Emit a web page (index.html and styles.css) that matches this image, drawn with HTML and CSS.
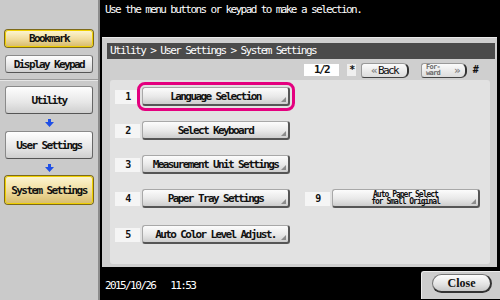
FILE: index.html
```html
<!DOCTYPE html>
<html lang="en">
<head>
  <meta charset="UTF-8" />
  <title>System Settings</title>
  <link rel="stylesheet" href="styles.css">
</head>
<body>
  <div class="screen">
    <!-- left side: shortcuts and path -->
    <aside class="side">
      <div class="side-top">
        <button type="button" class="sbtn short on">Bookmark</button>
        <button type="button" class="sbtn short">Display Keypad</button>
      </div>
      <div class="side-nav">
        <button type="button" class="sbtn tall">Utility</button>
        <span class="down"><svg width="9" height="8" viewBox="0 0 9 8"><path d="M3 0h3v3h3L4.5 8 0 3h3z" fill="#1f4fe6"/></svg></span>
        <button type="button" class="sbtn tall">User Settings</button>
        <span class="down"><svg width="9" height="8" viewBox="0 0 9 8"><path d="M3 0h3v3h3L4.5 8 0 3h3z" fill="#1f4fe6"/></svg></span>
        <button type="button" class="sbtn tall on">System Settings</button>
      </div>
    </aside>

    <main class="main">
      <p class="msg">Use the menu buttons or keypad to make a selection.</p>

      <section class="panel">
        <div class="crumb">Utility &gt; User Settings &gt; System Settings</div>
        <div class="pager">
          <span class="page">1/2</span>
          <span class="key">*</span>
          <button type="button" class="nav back"><i>&#171;</i>Back</button>
          <button type="button" class="nav fwd"><small>For-<br>ward</small><i>&#187;</i></button>
          <span class="key hash">#</span>
        </div>

        <div class="menu">
          <div class="item"><span class="num">1</span><button type="button" class="mbtn sel">Language Selection</button></div>
          <div class="item"><span class="num">2</span><button type="button" class="mbtn">Select Keyboard</button></div>
          <div class="item"><span class="num">3</span><button type="button" class="mbtn">Measurement Unit Settings</button></div>
          <div class="item"><span class="num">4</span><button type="button" class="mbtn">Paper Tray Settings</button></div>
          <div class="item"><span class="num">5</span><button type="button" class="mbtn">Auto Color Level Adjust.</button></div>
          <div class="item right"><span class="num">9</span><button type="button" class="mbtn two">Auto Paper Select<br>for Small Original</button></div>
        </div>
      </section>

      <footer class="foot">
        <span class="date">2015/10/26</span>
        <span class="time">11:53</span>
        <div class="close-tab"><button type="button" class="close">Close</button></div>
      </footer>
    </main>
  </div>
</body>
</html>
```

FILE: styles.css
```css
body {
  margin: 0;
  font-family: "DejaVu Sans Mono", "Liberation Mono", monospace;
  font-size: 11px;
  letter-spacing: -1.6px;
  color: #111;
}
button {
  font: inherit;
  letter-spacing: inherit;
  color: #111;
  padding: 0;
  cursor: pointer;
}
.screen {
  display: flex;
  width: 500px;
  height: 300px;
  overflow: hidden;
  background: #000;
}

/* 左側 */
.side {
  width: 98px;
  border-right: 2px solid #8c8c8c;
  background: #cacaca;
  display: flex;
  flex-direction: column;
}
.side-top {
  display: flex;
  flex-direction: column;
  gap: 8px;
  padding: 30px 5px 6px;
  border-bottom: 1px solid #9a9a9a;
}
.side-nav {
  display: flex;
  flex-direction: column;
  align-items: center;
  padding: 5px 5px 0;
  border-top: 1px solid #e6e6e6;
}
.sbtn {
  width: 88px;
  font-weight: bold;
  border: 1px solid #8a8a8a;
  border-bottom-color: #555;
  border-right-color: #666;
  border-radius: 3px;
  background: linear-gradient(#fefefe, #e6e6e6 60%, #cfcfcf);
}
.sbtn.short { height: 17px; }
.sbtn.short + .sbtn.short { height: 18px; }
.sbtn.tall { height: 28px; }
.sbtn.on {
  border: 1px solid #efcf00;
  box-shadow: 0 0 0 1px #7d6a1a;
  background: linear-gradient(#fcf4cf, #efdb9c 55%, #d8bd70);
}
.down {
  height: 17px;
  display: flex;
  align-items: center;
  justify-content: center;
}

/* メイン */
.main {
  flex: 1;
  display: flex;
  flex-direction: column;
  min-width: 0;
}
.msg {
  margin: 0;
  height: 33px;
  padding: 4px 5px 0;
  color: #fff;
  line-height: 12px;
}
.panel {
  height: 221px;
  margin: 0 3px 0 2px;
  padding: 5px 2px 3px 5px;
  background: #cfcfcf;
  border-top: 1px solid #e8e8e8;
  display: flex;
  flex-direction: column;
}
.crumb {
  height: 16px;
  line-height: 16px;
  padding-left: 3px;
  background: #4b4b4b;
  color: #fff;
}
.pager {
  height: 21px;
  display: flex;
  justify-content: flex-end;
  align-items: center;
  padding: 1px 17px 0 0;
  box-sizing: border-box;
}
.page {
  width: 35px;
  height: 12px;
  line-height: 12px;
  margin-right: 8px;
  background: #fff;
  text-align: center;
  font-weight: bold;
}
.key {
  width: 9px;
  height: 12px;
  line-height: 12px;
  margin-right: 5px;
  background: #efefef;
  text-align: center;
  font-weight: bold;
  font-size: 10px;
}
.key.hash {
  width: 6px;
  margin-right: 0;
  background: none;
}
.nav {
  width: 48px;
  height: 15px;
  border: 1px solid #999;
  border-right: 2px solid #333;
  border-bottom: 1px solid #444;
  border-radius: 3px 6px 6px 3px;
  background: linear-gradient(#fbfbfb, #dcdcdc);
  display: flex;
  align-items: center;
  justify-content: center;
}
.nav i {
  font-style: normal;
  color: #8a8a8a;
  font-weight: bold;
}
.back { margin-right: 12px; }
.back i { margin-right: 2px; }
.fwd {
  width: 46px;
  margin-right: 5px;
  justify-content: space-between;
  padding: 0 6px 0 4px;
}
.fwd small {
  font-size: 7px;
  line-height: 6.5px;
  letter-spacing: -0.7px;
  text-align: left;
  font-weight: bold;
  color: #6a6a6a;
}

/* メニュー */
.menu {
  flex: 1;
  margin: 0 5px 0 3px;
  padding-left: 5px;
  background: #e2e2e2;
  border-radius: 3px;
  display: grid;
  grid-template-columns: 175px 175px;
  grid-template-rows: 33px 35px 33px 35px 37px;
  column-gap: 15px;
  align-content: start;
}
.item {
  grid-column: 1;
  display: flex;
  align-items: center;
  gap: 2px;
}
.item.right { grid-area: 4 / 2; }
.num {
  width: 25px;
  height: 14px;
  line-height: 14px;
  background: #f5f5f5;
  text-align: center;
  font-size: 10px;
  font-weight: bold;
}
.mbtn {
  position: relative;
  flex: 1;
  height: 19px;
  font-weight: bold;
  border: 1px solid #a8a8a8;
  border-right: 2px solid #555;
  border-bottom: 2px solid #555;
  border-radius: 3px;
  background: linear-gradient(#fcfcfc, #e8e8e8 55%, #cdcdcd);
}
.mbtn::after {
  content: "";
  position: absolute;
  right: 2px;
  bottom: 2px;
  border-left: 5px solid transparent;
  border-bottom: 5px solid #8c8c8c;
}
.mbtn.sel {
  outline: 3px solid #e4007f;
  outline-offset: 2px;
  border-radius: 3px;
}
.mbtn.two {
  font-size: 8px;
  line-height: 7.5px;
  letter-spacing: -1px;
  height: 19px;
}

/* フッター */
.foot {
  flex: 1;
  display: flex;
  align-items: flex-start;
  color: #fff;
}
.date, .time {
  margin-top: 13px;
  line-height: 12px;
}
.date { margin-left: 5px; }
.time { margin-left: 15px; }
.close-tab {
  margin: 4px 0 0 auto;
  padding: 2px 8px 6px 10px;
  background: #cdcdcd;
  border-top: 1px solid #ececec;
  border-left: 1px solid #ececec;
  border-radius: 3px 0 0 0;
}
.close {
  width: 60px;
  height: 19px;
  border: 1px solid #777;
  border-right: 2px solid #333;
  border-bottom: 2px solid #333;
  border-radius: 10px;
  background: linear-gradient(#fefefe, #e2e2e2 60%, #c8c8c8);
  font-family: "Liberation Serif", serif;
  font-weight: bold;
  font-size: 12px;
  letter-spacing: 0;
}
```
